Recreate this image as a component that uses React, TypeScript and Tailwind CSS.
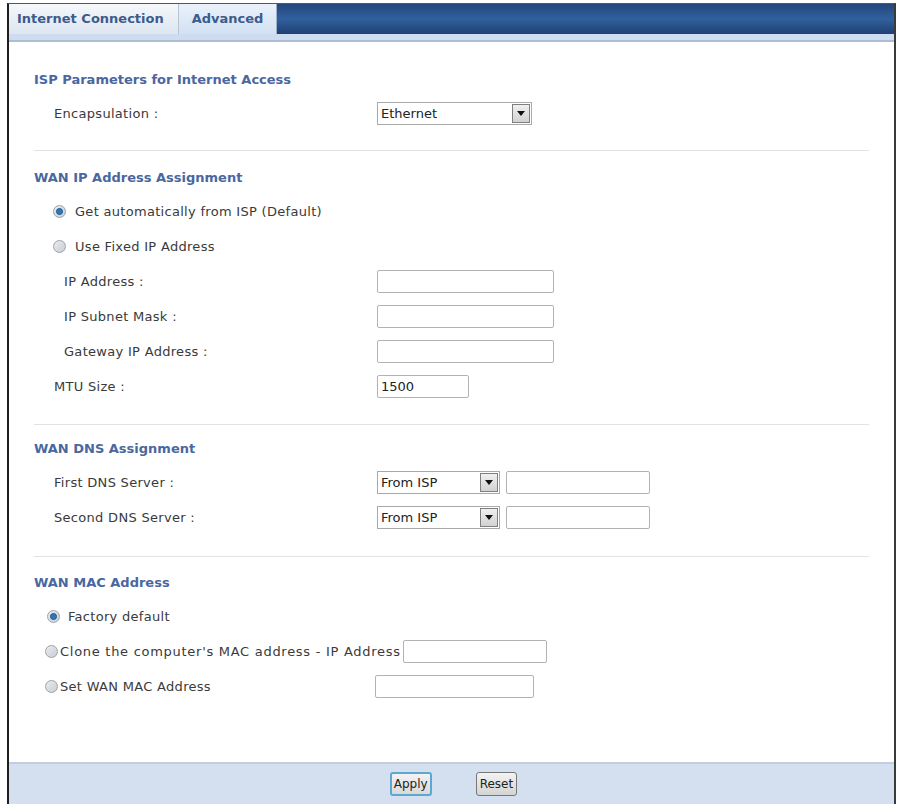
import React from "react";

const font = { fontFamily: '"DejaVu Sans", Verdana, sans-serif' };

function Radio({ checked }: { checked?: boolean }) {
  return (
    <span className="inline-flex w-[13px] h-[13px] shrink-0 rounded-full border border-[#9aa3ad] bg-gradient-to-br from-[#e9ecef] to-[#c9ced4] items-center justify-center">
      {checked && (
        <span className="w-[7px] h-[7px] rounded-full bg-[#2f78b8] border border-[#1d5a93]" />
      )}
    </span>
  );
}

function TextInput({ w, value }: { w: string; value?: string }) {
  return (
    <div
      className={`${w} h-[23px] border border-[#b3b3b3] rounded-[2px] bg-white flex items-center px-[3px] text-[13px] text-[#222]`}
    >
      {value}
    </div>
  );
}

function Select({ w, value }: { w: string; value: string }) {
  return (
    <div
      className={`${w} h-[23px] border border-[#a9a9a9] bg-white flex items-center justify-between text-[13px] text-[#222]`}
    >
      <span className="pl-[3px]">{value}</span>
      <span className="w-[18px] h-[19px] mr-[1px] border border-[#7f7f7f] bg-gradient-to-b from-[#f0f0f0] to-[#d2d2d2] flex items-center justify-center">
        <svg width="8" height="5" viewBox="0 0 8 5">
          <path d="M0 0 L8 0 L4 5 Z" fill="#111" />
        </svg>
      </span>
    </div>
  );
}

function Heading({ children }: { children: React.ReactNode }) {
  return (
    <div className="h-[20px] flex items-center pl-[25px] text-[13px] font-bold text-[#4a67a0]">
      {children}
    </div>
  );
}

function Row({
  label,
  indent = "pl-[45px]",
  children,
}: {
  label: string;
  indent?: string;
  children?: React.ReactNode;
}) {
  return (
    <div className="h-[35px] flex items-center text-[13px] tracking-[0.3px] text-[#3a3a3a]">
      <div className={`w-[368px] shrink-0 ${indent}`}>{label}</div>
      <div className="flex items-center gap-[6px] tracking-normal">{children}</div>
    </div>
  );
}

function Separator({ mt, mb }: { mt: string; mb: string }) {
  return <div className={`${mt} ${mb} mx-[25px] border-t border-[#e2e2e2]`} />;
}

export default function App() {
  return (
    <div className="w-[898px] h-[804px] bg-white overflow-hidden" style={font}>
      <div className="ml-[7px] mr-[2px] mt-[3px] h-[801px] border-l-2 border-r-2 border-t border-l-[#1e1e1e] border-r-[#3a3a3a] border-t-[#555] flex flex-col">
        {/* Tab bar */}
        <div className="h-[30px] flex">
          <div className="w-[170px] h-full flex items-center pl-[8px] bg-gradient-to-b from-[#f5f7fa] to-[#dde6f1] border-r border-[#b8c4d4] text-[13px] font-bold text-[#3d5b8c]">
            Internet Connection
          </div>
          <div className="w-[98px] h-full flex items-center justify-center bg-gradient-to-b from-[#eaf1fa] to-[#d2e1f3] border-r border-[#9fb1c9] text-[13px] font-bold text-[#3d5b8c]">
            Advanced
          </div>
          <div className="flex-1 h-full bg-gradient-to-b from-[#24467c] via-[#31619e] to-[#1f3f72]" />
        </div>
        <div className="h-[6px] bg-[#cddcf0]" />
        <div className="h-[2px] bg-[#aebdd1]" />

        {/* Content */}
        <div className="flex-1 flex flex-col">
          <div className="h-[28px]" />
          <Heading>ISP Parameters for Internet Access</Heading>
          <div className="h-[6px]" />
          <Row label="Encapsulation :">
            <Select w="w-[155px]" value="Ethernet" />
          </Row>
          <Separator mt="mt-[19px]" mb="mb-[17px]" />

          <Heading>WAN IP Address Assignment</Heading>
          <div className="h-[6px]" />
          <div className="h-[35px] flex items-center pl-[44px] gap-[9px] text-[13px] tracking-[0.3px] text-[#3a3a3a]">
            <Radio checked />
            <span>Get automatically from ISP (Default)</span>
          </div>
          <div className="h-[35px] flex items-center pl-[44px] gap-[9px] text-[13px] tracking-[0.3px] text-[#3a3a3a]">
            <Radio />
            <span>Use Fixed IP Address</span>
          </div>
          <Row label="IP Address :" indent="pl-[55px]">
            <TextInput w="w-[177px]" />
          </Row>
          <Row label="IP Subnet Mask :" indent="pl-[55px]">
            <TextInput w="w-[177px]" />
          </Row>
          <Row label="Gateway IP Address :" indent="pl-[55px]">
            <TextInput w="w-[177px]" />
          </Row>
          <Row label="MTU Size :">
            <TextInput w="w-[92px]" value="1500" />
          </Row>
          <Separator mt="mt-[20px]" mb="mb-[14px]" />

          <Heading>WAN DNS Assignment</Heading>
          <div className="h-[6px]" />
          <Row label="First DNS Server :">
            <Select w="w-[123px]" value="From ISP" />
            <TextInput w="w-[144px]" />
          </Row>
          <Row label="Second DNS Server :">
            <Select w="w-[123px]" value="From ISP" />
            <TextInput w="w-[144px]" />
          </Row>
          <Separator mt="mt-[21px]" mb="mb-[16px]" />

          <Heading>WAN MAC Address</Heading>
          <div className="h-[6px]" />
          <div className="h-[35px] flex items-center pl-[38px] gap-[8px] text-[13px] tracking-[0.3px] text-[#3a3a3a]">
            <Radio checked />
            <span>Factory default</span>
          </div>
          <div className="h-[35px] flex items-center pl-[36px] gap-[2px] text-[13px] tracking-[0.72px] text-[#3a3a3a]">
            <Radio />
            <span>Clone the computer's MAC address - IP Address</span>
            <TextInput w="w-[144px]" />
          </div>
          <div className="h-[35px] flex items-center text-[13px] tracking-[0.3px] text-[#3a3a3a]">
            <div className="w-[366px] shrink-0 pl-[36px] flex items-center gap-[2px]">
              <Radio />
              <span>Set WAN MAC Address</span>
            </div>
            <TextInput w="w-[159px]" />
          </div>
          <div className="flex-1" />
        </div>

        {/* Footer */}
        <div className="h-[42px] bg-[#d4e0ef] border-t-2 border-[#c3cde0] flex items-center justify-center gap-[44px] pl-[4px]">
          <button className="h-[24px] px-[2px] rounded-[3px] border-2 border-[#5fa7d3] bg-gradient-to-b from-[#f3f3f3] to-[#d9d9d9] text-[12px] text-[#222]">
            Apply
          </button>
          <button className="h-[24px] px-[3px] rounded-[3px] border border-[#777] bg-gradient-to-b from-[#f3f3f3] to-[#d4d4d4] text-[12px] text-[#222]">
            Reset
          </button>
        </div>
      </div>
    </div>
  );
}
